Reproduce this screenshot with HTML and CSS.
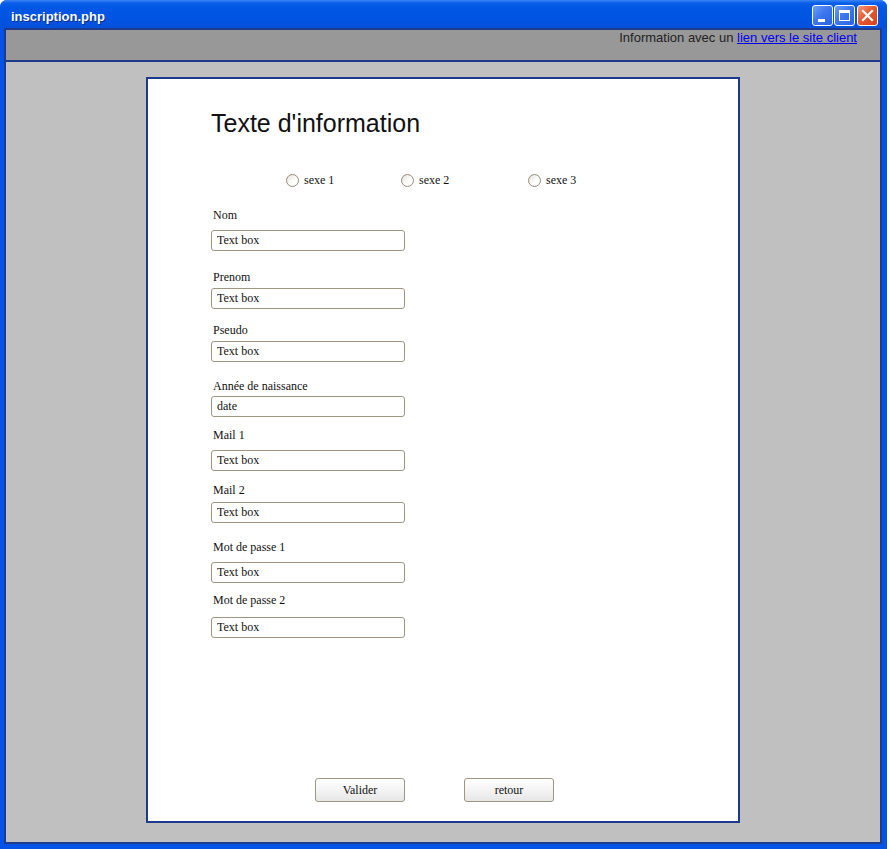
FILE: index.html
```html
<!DOCTYPE html>
<html lang="fr">
<head>
<meta charset="utf-8">
<title>inscription.php</title>
<link rel="stylesheet" href="styles.css">
</head>
<body>
<div class="window">
  <div class="titlebar">
    <span class="title">inscription.php</span>
    <div class="controls">
      <span class="ctl ctl-min"><span class="min-bar"></span></span>
      <span class="ctl ctl-max"><span class="max-box"></span></span>
      <span class="ctl ctl-close">
        <svg width="13" height="13" viewBox="0 0 13 13"><path d="M2 2 L11 11 M11 2 L2 11" stroke="#fff" stroke-width="2.2" stroke-linecap="square"/></svg>
      </span>
    </div>
  </div>
  <div class="client">
    <div class="toolbar">Information avec un <a href="#" class="client-link">lien vers le site client</a></div>
    <div class="content">
      <div class="panel">
        <h1 class="heading">Texte d'information</h1>
        <div class="radios">
          <label class="opt"><input type="radio" name="sexe" class="radio"><span>sexe 1</span></label>
          <label class="opt"><input type="radio" name="sexe" class="radio"><span>sexe 2</span></label>
          <label class="opt"><input type="radio" name="sexe" class="radio"><span>sexe 3</span></label>
        </div>
        <div class="fields">
          <div class="field f-nom"><label class="lbl">Nom</label><input class="box" type="text" value="Text box"></div>
          <div class="field f-prenom"><label class="lbl">Prenom</label><input class="box" type="text" value="Text box"></div>
          <div class="field f-pseudo"><label class="lbl">Pseudo</label><input class="box" type="text" value="Text box"></div>
          <div class="field f-annee"><label class="lbl">Année de naissance</label><input class="box" type="text" value="date"></div>
          <div class="field f-mail1"><label class="lbl">Mail 1</label><input class="box" type="text" value="Text box"></div>
          <div class="field f-mail2"><label class="lbl">Mail 2</label><input class="box" type="text" value="Text box"></div>
          <div class="field f-mdp1"><label class="lbl">Mot de passe 1</label><input class="box" type="text" value="Text box"></div>
          <div class="field f-mdp2"><label class="lbl">Mot de passe 2</label><input class="box" type="text" value="Text box"></div>
        </div>
        <div class="actions">
          <button class="btn" type="button">Valider</button>
          <button class="btn" type="button">retour</button>
        </div>
      </div>
    </div>
  </div>
</div>
</body>
</html>
```

FILE: styles.css
```css
html, body {
  margin: 0;
  padding: 0;
  background: #ffffff;
}
body {
  width: 890px;
  height: 849px;
  overflow: hidden;
}
.window {
  width: 887px;
  height: 849px;
  box-sizing: border-box;
  background: #0453e4;
  border-radius: 7px 7px 0 0;
  display: flex;
  flex-direction: column;
  padding: 0 5px 5px 4px;
}
.titlebar {
  height: 28px;
  margin: 0 -5px 0 -4px;
  padding: 0 9px 0 11px;
  border-radius: 7px 7px 0 0;
  background: linear-gradient(#3a86f5 0px, #0a5fe9 3px, #0057e4 8px, #0054e1 20px, #0450da 28px);
  display: flex;
  align-items: flex-start;
  justify-content: space-between;
  flex: none;
}
.title {
  font-family: "Liberation Sans", Arial, sans-serif;
  font-weight: bold;
  font-size: 13px;
  line-height: 15px;
  color: #ffffff;
  text-shadow: 1px 1px 0 #0a2d8c;
  padding-top: 9px;
}
.controls {
  display: flex;
  gap: 1px;
  padding-top: 5px;
}
.ctl {
  width: 21px;
  height: 21px;
  box-sizing: border-box;
  border: 1px solid #ffffff;
  border-radius: 3px;
  position: relative;
  display: flex;
  align-items: center;
  justify-content: center;
}
.ctl-min, .ctl-max {
  background: linear-gradient(135deg, #6d9ef8 0%, #3e78ee 45%, #2a62e2 100%);
}
.ctl-close {
  background: linear-gradient(135deg, #f29a78 0%, #e65a30 45%, #d4401c 100%);
  margin-left: 1px;
}
.min-bar {
  position: absolute;
  left: 5px;
  bottom: 3px;
  width: 7px;
  height: 3px;
  background: #ffffff;
}
.max-box {
  width: 11px;
  height: 11px;
  box-sizing: border-box;
  border: 1px solid #ffffff;
  border-top-width: 3px;
}
.client {
  flex: 1;
  display: flex;
  flex-direction: column;
  border: 2px solid #1e3a8c;
  background: #c0c0c0;
}
.toolbar {
  height: 30px;
  flex: none;
  background: #989898;
  border-bottom: 2px solid #1e3a8c;
  font-family: "Liberation Sans", Arial, sans-serif;
  font-size: 13px;
  line-height: 15px;
  color: #222222;
  text-align: right;
  padding: 0 23px 0 0;
}
.client-link {
  color: #0000ee;
  text-decoration: underline;
}
.content {
  flex: 1;
  padding: 15px 0 0 140px;
}
.panel {
  width: 594px;
  height: 746px;
  box-sizing: border-box;
  border: 2px solid #1e3a8c;
  background: #ffffff;
  display: flex;
  flex-direction: column;
  padding: 30px 0 19px 63px;
}
.heading {
  margin: 0;
  font-family: "Liberation Sans", Arial, sans-serif;
  font-weight: normal;
  font-size: 25px;
  line-height: 29px;
  color: #111111;
}
.radios {
  display: grid;
  grid-template-columns: 115px 127px auto;
  margin: 35px 0 0 75px;
  font-family: "Liberation Serif", "Times New Roman", serif;
  font-size: 12px;
  line-height: 14px;
  color: #111111;
}
.opt {
  display: flex;
  align-items: center;
  gap: 5px;
}
.radio {
  appearance: none;
  -webkit-appearance: none;
  width: 13px;
  height: 13px;
  margin: 0;
  box-sizing: border-box;
  border: 1px solid #978a78;
  border-radius: 50%;
  background: linear-gradient(135deg, #e4e1da 0%, #ffffff 60%);
}
.fields {
  display: flex;
  flex-direction: column;
}
.field {
  display: flex;
  flex-direction: column;
  align-items: flex-start;
}
.lbl {
  display: block;
  font-family: "Liberation Serif", "Times New Roman", serif;
  font-size: 12px;
  line-height: 14px;
  height: 14px;
  color: #111111;
  padding-left: 2px;
}
.box {
  display: block;
  width: 194px;
  height: 21px;
  box-sizing: border-box;
  margin: 0;
  border: 1px solid #a09482;
  border-radius: 3px;
  padding: 0 5px;
  font-family: "Liberation Serif", "Times New Roman", serif;
  font-size: 12px;
  color: #111111;
  background: #ffffff;
  outline: none;
}
.f-nom { margin-top: 21px; }
.f-nom .lbl { margin-bottom: 8px; }
.f-prenom { margin-top: 19px; }
.f-prenom .lbl { margin-bottom: 4px; }
.f-pseudo { margin-top: 14px; }
.f-pseudo .lbl { margin-bottom: 4px; }
.f-annee { margin-top: 17px; }
.f-annee .lbl { margin-bottom: 3px; }
.f-mail1 { margin-top: 11px; }
.f-mail1 .lbl { margin-bottom: 8px; }
.f-mail2 { margin-top: 12px; }
.f-mail2 .lbl { margin-bottom: 5px; }
.f-mdp1 { margin-top: 17px; }
.f-mdp1 .lbl { margin-bottom: 8px; }
.f-mdp2 { margin-top: 10px; }
.f-mdp2 .lbl { margin-bottom: 10px; }
.actions {
  margin-top: auto;
  display: flex;
  gap: 59px;
  padding-left: 104px;
}
.btn {
  width: 90px;
  height: 24px;
  box-sizing: border-box;
  border: 1px solid #a09482;
  border-radius: 3px;
  background: linear-gradient(#ffffff 0%, #f4f4f4 50%, #e6e6e6 100%);
  font-family: "Liberation Serif", "Times New Roman", serif;
  font-size: 12px;
  color: #111111;
  padding: 0;
}
```
